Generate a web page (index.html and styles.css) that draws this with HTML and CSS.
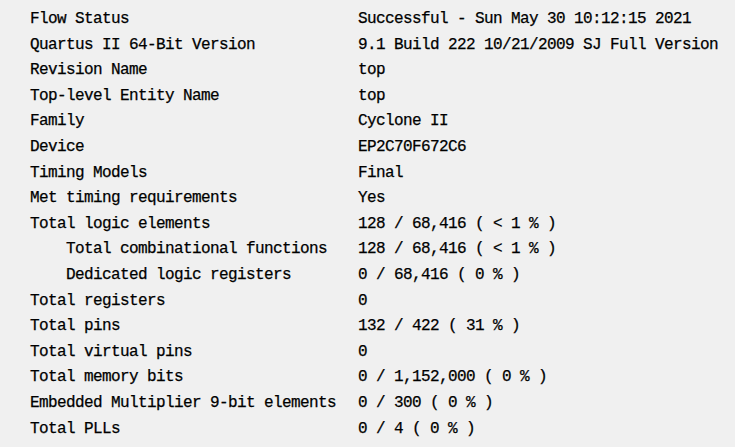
FILE: index.html
```html
<!DOCTYPE html>
<html>
<head>
<meta charset="utf-8">
<link rel="stylesheet" href="styles.css">
</head>
<body>
<div class="summary">
  <div class="label">Flow Status</div><div class="value">Successful - Sun May 30 10:12:15 2021</div>
  <div class="label">Quartus II 64-Bit Version</div><div class="value">9.1 Build 222 10/21/2009 SJ Full Version</div>
  <div class="label">Revision Name</div><div class="value">top</div>
  <div class="label">Top-level Entity Name</div><div class="value">top</div>
  <div class="label">Family</div><div class="value">Cyclone II</div>
  <div class="label">Device</div><div class="value">EP2C70F672C6</div>
  <div class="label">Timing Models</div><div class="value">Final</div>
  <div class="label">Met timing requirements</div><div class="value">Yes</div>
  <div class="label">Total logic elements</div><div class="value">128 / 68,416 ( &lt; 1 % )</div>
  <div class="label sub">Total combinational functions</div><div class="value">128 / 68,416 ( &lt; 1 % )</div>
  <div class="label sub">Dedicated logic registers</div><div class="value">0 / 68,416 ( 0 % )</div>
  <div class="label">Total registers</div><div class="value">0</div>
  <div class="label">Total pins</div><div class="value">132 / 422 ( 31 % )</div>
  <div class="label">Total virtual pins</div><div class="value">0</div>
  <div class="label">Total memory bits</div><div class="value">0 / 1,152,000 ( 0 % )</div>
  <div class="label">Embedded Multiplier 9-bit elements</div><div class="value">0 / 300 ( 0 % )</div>
  <div class="label">Total PLLs</div><div class="value">0 / 4 ( 0 % )</div>
</div>
</body>
</html>
```

FILE: styles.css
```css
html, body {
  margin: 0;
  padding: 0;
  background: #f0f0f0;
}
body {
  width: 735px;
  height: 447px;
  overflow: hidden;
}
.summary {
  display: grid;
  grid-template-columns: 328px auto;
  grid-auto-rows: 25.6px;
  padding: 7px 0 0 30px;
  font-family: "Liberation Mono", monospace;
  font-size: 16px;
  letter-spacing: -0.6px;
  line-height: 25.6px;
  color: #000;
  white-space: pre;
  -webkit-text-stroke: 0.25px #000;
}
.label.sub {
  padding-left: 36px;
}
```
